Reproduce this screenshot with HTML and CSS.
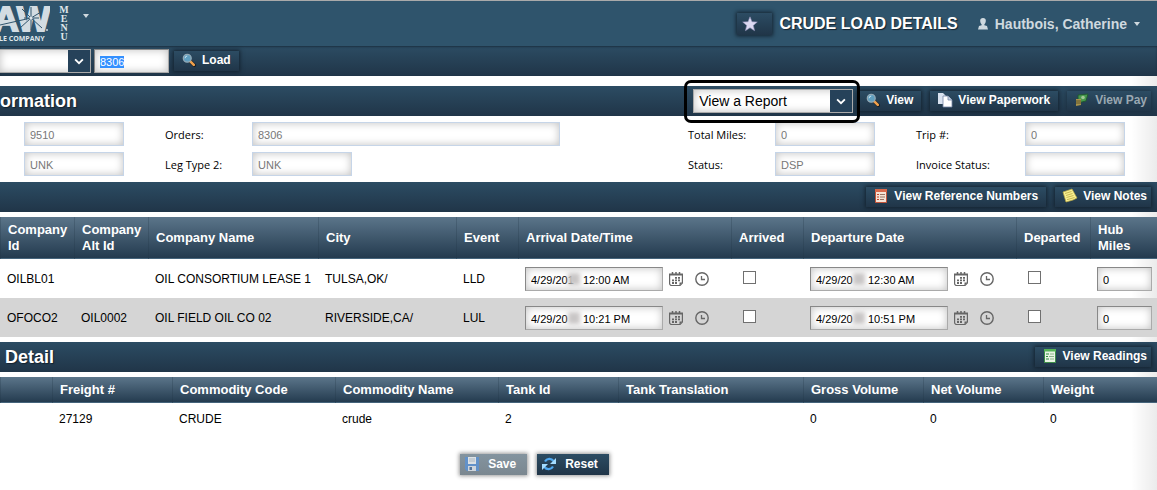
FILE: index.html
```html
<!DOCTYPE html>
<html lang="en">
<head>
<meta charset="UTF-8" />
<title>Crude Load Details</title>
<link rel="stylesheet" href="styles.css">
</head>
<body>

<!-- shared icons -->
<svg class="sprite" aria-hidden="true">
  <symbol id="i-search" viewBox="0 0 16 16">
    <path d="M9 9l5 5" stroke="#111b26" stroke-width="4" stroke-linecap="round"/>
    <path d="M9.500 9.500l4 4" stroke="#f0a04b" stroke-width="3" stroke-linecap="round"/>
    <circle cx="6" cy="6" r="4.500" fill="#5f9fc0" stroke="#93a9b5" stroke-width="1.500"/>
    <path d="M3.500 6a2.500 2.500 0 0 1 2.500-2.500" stroke="#d7eef8" fill="none"/>
  </symbol>
  <symbol id="i-cal" viewBox="0 0 14 14">
    <path d="M.6 2.500v9a2 2 0 0 0 2 2h8.400l2.400-2.400V2.500" fill="none" stroke="#666" stroke-width="1.200"/>
    <path d="M0 2.500h14" stroke="#666" stroke-width="2"/>
    <path d="M3.500 0v3M7 0v3M10.500 0v3" stroke="#666" stroke-width="1.500"/>
    <path d="M6 5.800h2M9 5.800h2M3 8.400h2M6 8.400h2M9 8.400h2M3 11h2M6 11h2" stroke="#666" stroke-width="1.800"/>
    <path d="M10.500 13.500v-3h3z" fill="#666"/>
  </symbol>
  <symbol id="i-clock" viewBox="0 0 14 14">
    <circle cx="7" cy="7" r="6.200" fill="none" stroke="#666" stroke-width="1.400"/>
    <path d="M6.500 4v3.500h3.500" fill="none" stroke="#666" stroke-width="1.300"/>
  </symbol>
  <symbol id="i-chev" viewBox="0 0 9 6">
    <path d="M1 1l3.500 3.500L8 1" fill="none" stroke="#fff" stroke-width="1.600"/>
  </symbol>
</svg>

<header class="topbar">
  <svg class="logo" width="50" height="37" viewBox="0 0 50 37" role="img" aria-label="Company logo">
    <text class="logo-big" x="50" y="26" text-anchor="end">AW</text>
    <g stroke="#2f546c" fill="none">
      <path d="M0 20L31 13l10-6M31 13l11 10M31 13V2M31 13L22 4M31 13L20 23M31 13v12" stroke-width="1"/>
      <path d="M24 13h15" stroke-width="1"/>
    </g>
    <circle cx="31" cy="13" r="1.500" fill="#dfe6ea"/>
    <circle cx="47" cy="25" r="1" fill="#c9d4db"/>
    <text class="logo-small" x="-1" y="36">LE COMPANY</text>
  </svg>
  <button class="menu" aria-label="Menu"><span>M</span><span>E</span><span>N</span><span>U</span></button>
  <span class="caret"></span>
  <div class="top-right">
    <button class="btn star" aria-label="Add to favorites">
      <svg width="16" height="16" viewBox="0 0 16 16"><path d="M8 .8l2 4.900 5.300.3-4 3.400 1.300 5.300L8 11.800l-4.600 2.900 1.300-5.300-4-3.400L6 5.700z" fill="#dcd9f2" stroke="#8f8fb5" stroke-width=".6"/></svg>
    </button>
    <h1>CRUDE LOAD DETAILS</h1>
    <button class="user">
      <svg width="10" height="12" viewBox="0 0 10 12"><path d="M5 0a2.800 2.800 0 0 1 2.800 3c0 1.600-.8 2.600-1.400 3.200v1l2.600.8 1 3.500H0L1 8l2.600-.8v-1C3 5.600 2.200 4.600 2.200 3A2.800 2.800 0 0 1 5 0z" fill="#cfd9df"/></svg>
      Hautbois, Catherine
      <span class="caret"></span>
    </button>
  </div>
</header>

<div class="bar toolbar">
  <div class="select-wrap lookup">
    <select aria-label="Search by"><option></option></select>
    <span class="chev"><svg width="10" height="7"><use href="#i-chev"/></svg></span>
  </div>
  <input class="field order-no" id="orderNo" type="text" value="8306" aria-label="Order number">
  <button class="btn"><svg width="16" height="14"><use href="#i-search"/></svg>Load</button>
</div>

<div class="bar info-bar">
  <h2>ormation</h2>
  <div class="actions">
    <div class="select-wrap report">
      <select aria-label="View a Report"><option>View a Report</option></select>
      <span class="chev"><svg width="10" height="7"><use href="#i-chev"/></svg></span>
    </div>
    <button class="btn"><svg width="16" height="14"><use href="#i-search"/></svg>View</button>
    <button class="btn">
      <svg width="16" height="16" viewBox="0 0 16 16"><path d="M1 1h5l3 3v8H1z" fill="#d9e2ef"/><path d="M6 4h5l4 4v7H6z" fill="#fff" stroke="#7387a5" stroke-width=".8"/><path d="M11 4v4h4" fill="#c3d0e2" stroke="#7387a5" stroke-width=".8"/></svg>View Paperwork
    </button>
    <button class="btn" disabled>
      <svg width="16" height="16" viewBox="0 0 16 16"><path d="M4 3l10-1-2 7-8 2z" fill="#4fae4a" stroke="#1f5d29"/><circle cx="9" cy="5.500" r="1.800" fill="#bfe8a5"/><path d="M2 7h5v6l-5 1z" fill="#c9a94c"/><path d="M2 9h5M2 11h5" stroke="#6c5a23"/></svg>View Pay
    </button>
  </div>
</div>

<form class="info">
  <input class="field" type="text" value="9510" aria-label="Leg number" disabled>
  <label for="orders">Orders:</label>
  <input class="field wide" id="orders" type="text" value="8306" disabled>
  <label for="miles">Total Miles:</label>
  <input class="field" id="miles" type="text" value="0" disabled>
  <label for="trip">Trip #:</label>
  <input class="field" id="trip" type="text" value="0" disabled>

  <input class="field" type="text" value="UNK" aria-label="Leg Type 1" disabled>
  <label for="leg2">Leg Type 2:</label>
  <input class="field" id="leg2" type="text" value="UNK" disabled>
  <label for="status">Status:</label>
  <input class="field" id="status" type="text" value="DSP" disabled>
  <label for="invoice">Invoice Status:</label>
  <input class="field" id="invoice" type="text" disabled>
</form>

<div class="bar">
  <div class="actions">
    <button class="btn">
      <svg width="16" height="16" viewBox="0 0 16 16"><path d="M2.500 1.500h11v13h-11z" fill="#f5e3d7" stroke="#c4553a"/><path d="M2 1h12v3H2z" fill="#d9694c"/><path d="M4 6.500h2M4 9h2M4 11.500h2" stroke="#c4452a" stroke-width="1.200"/><path d="M7 6.500h5M7 9h5M7 11.500h4" stroke="#9a7464"/></svg>View Reference Numbers
    </button>
    <button class="btn">
      <svg width="16" height="16" viewBox="0 0 16 16"><path d="M1 4l9-3 5 9-4 2-7 2z" fill="#f8ef90" stroke="#b9a843" stroke-width=".7"/><path d="M3 5.500l6.500-2M4 7.500l6.500-2M4.500 9.500l7-2M5 11.700l7.500-2.200" stroke="#b9a843" stroke-width=".8"/></svg>View Notes
    </button>
  </div>
</div>

<table class="grid stops">
  <colgroup><col class="c-id"><col class="c-id"><col class="c-name"><col class="c-city"><col class="c-event"><col class="c-date"><col class="c-check"><col class="c-date"><col class="c-id"><col></colgroup>
  <thead>
    <tr><th>Company Id</th><th>Company Alt Id</th><th>Company Name</th><th>City</th><th>Event</th><th>Arrival Date/Time</th><th>Arrived</th><th>Departure Date</th><th>Departed</th><th>Hub Miles</th></tr>
  </thead>
  <tbody>
    <tr>
      <td>OILBL01</td><td></td><td>OIL CONSORTIUM LEASE 1</td><td>TULSA,OK/</td><td>LLD</td>
      <td><div class="date"><input class="field" type="text" aria-label="Arrival" value="4/29/201&nbsp;&nbsp;&nbsp;12:00 AM"><i class="smudge"></i><svg width="14" height="14"><use href="#i-cal"/></svg><svg width="14" height="14"><use href="#i-clock"/></svg></div></td>
      <td><input type="checkbox" aria-label="Arrived"></td>
      <td><div class="date"><input class="field" type="text" aria-label="Departure" value="4/29/20&nbsp;&nbsp;&nbsp;&nbsp;&nbsp;12:30 AM"><i class="smudge"></i><svg width="14" height="14"><use href="#i-cal"/></svg><svg width="14" height="14"><use href="#i-clock"/></svg></div></td>
      <td><input type="checkbox" aria-label="Departed"></td>
      <td><input class="field hub" type="text" aria-label="Hub miles" value="0"></td>
    </tr>
    <tr>
      <td>OFOCO2</td><td>OIL0002</td><td>OIL FIELD OIL CO 02</td><td>RIVERSIDE,CA/</td><td>LUL</td>
      <td><div class="date"><input class="field" type="text" aria-label="Arrival" value="4/29/20&nbsp;&nbsp;&nbsp;&nbsp;&nbsp;10:21 PM"><i class="smudge"></i><svg width="14" height="14"><use href="#i-cal"/></svg><svg width="14" height="14"><use href="#i-clock"/></svg></div></td>
      <td><input type="checkbox" aria-label="Arrived"></td>
      <td><div class="date"><input class="field" type="text" aria-label="Departure" value="4/29/20&nbsp;&nbsp;&nbsp;&nbsp;&nbsp;10:51 PM"><i class="smudge"></i><svg width="14" height="14"><use href="#i-cal"/></svg><svg width="14" height="14"><use href="#i-clock"/></svg></div></td>
      <td><input type="checkbox" aria-label="Departed"></td>
      <td><input class="field hub" type="text" aria-label="Hub miles" value="0"></td>
    </tr>
  </tbody>
</table>

<div class="bar detail-bar">
  <h2>Detail</h2>
  <div class="actions">
    <button class="btn">
      <svg width="16" height="16" viewBox="0 0 16 16"><path d="M2.500 1.500h11v13h-11z" fill="#e9f5e4" stroke="#3d8f48"/><path d="M2 1h12v2.500H2z" fill="#55b356"/><path d="M4 6h3M4 8.500h2M4 11h3" stroke="#2f8a3c" stroke-width="1.200"/><path d="M8 6h4M7 8.500h5M8 11h4" stroke="#8bb389"/></svg>View Readings
    </button>
  </div>
</div>

<table class="grid freight">
  <colgroup><col class="f-first"><col class="f-small"><col class="f-wide"><col class="f-wide"><col class="f-small"><col class="f-trans"><col class="f-small"><col class="f-small"><col></colgroup>
  <thead>
    <tr><th></th><th>Freight #</th><th>Commodity Code</th><th>Commodity Name</th><th>Tank Id</th><th>Tank Translation</th><th>Gross Volume</th><th>Net Volume</th><th>Weight</th></tr>
  </thead>
  <tbody>
    <tr><td></td><td>27129</td><td>CRUDE</td><td>crude</td><td>2</td><td></td><td>0</td><td>0</td><td>0</td></tr>
  </tbody>
</table>

<div class="footer">
  <button class="btn save" disabled>
    <svg width="16" height="16" viewBox="0 0 16 16"><path d="M1 1h14v14H3l-2-2z" fill="#5b93d6"/><path d="M4 1h8v7H4z" fill="#f4f6f8"/><path d="M5 3h6M5 5h6" stroke="#b5c0ca"/><path d="M4 10h8v5H4z" fill="#e3e8ee"/><path d="M5.500 11h2.500v3H5.500z" fill="#4a6f9c"/></svg>Save
  </button>
  <button class="btn">
    <svg width="16" height="16" viewBox="0 0 16 16"><path d="M4 5.500a5 5 0 0 1 8.500-.5M12 10.500a5 5 0 0 1-8.500.5" fill="none" stroke="#4fa8f0" stroke-width="2.200"/><path d="M15 2v6H9zM1 14V8h6z" fill="#a4dcff"/></svg>Reset
  </button>
</div>

<script>
// order number is ready to be typed over
const orderNo = document.getElementById('orderNo');
orderNo.focus();
orderNo.select();
</script>

</body>
</html>
```
FILE: styles.css
```css
* {
  box-sizing: border-box;
}
body {
  margin: 0;
  min-height: 100vh;
  background: linear-gradient(to right, rgba(0, 0, 0, 0) calc(100% - 26px), rgba(0, 0, 0, 0.08)) #fff;
  color: #000;
  font-family: "Liberation Sans", Arial, sans-serif;
  font-size: 12px;
}
h1, h2 {
  margin: 0;
  color: #fff;
  text-shadow: 1px 1px 1px #14222e;
}
h1 {
  font-size: 16px;
}
h2 {
  font-size: 18px;
}
button {
  font-family: inherit;
  border: none;
  cursor: pointer;
}
.sprite {
  display: none;
}

/* top bar */
.topbar {
  display: flex;
  height: 46px;
  padding: 4px 17px 0 0;
  border-top: 1px solid #aaa;
  background: #2f546c;
}
.logo-big {
  font-size: 35px;
  font-weight: bold;
  fill: #d3dce2;
  stroke: #d3dce2;
  stroke-width: 2;
}
.logo-small {
  font-family: "Open Sans", sans-serif;
  font-size: 7px;
  font-weight: bold;
  fill: #dfe6ea;
}
.menu {
  display: flex;
  flex-direction: column;
  align-items: center;
  align-self: flex-start;
  width: 10px;
  margin: 0 14px 0 9px;
  padding: 0;
  background: none;
  color: #dfe6ea;
  font-family: "Liberation Serif", "Times New Roman", serif;
  font-size: 10px;
  font-weight: bold;
  line-height: 9px;
}
.caret {
  align-self: flex-start;
  margin-top: 9px;
  border: 3px solid transparent;
  border-top: 4px solid #cfd9df;
  border-bottom: none;
}
.top-right {
  display: flex;
  align-items: center;
  height: 38px;
  margin-left: auto;
}
.top-right h1 {
  margin: 0 20px 0 7px;
}
.user {
  display: flex;
  align-items: center;
  gap: 7px;
  padding: 0;
  background: none;
  color: #cfd9df;
  font-size: 14px;
  font-weight: bold;
}
.user .caret {
  align-self: center;
  margin-top: 0;
}

/* dark section bars */
.bar {
  display: flex;
  align-items: center;
  height: 30px;
  padding-right: 6px;
  background: linear-gradient(#2c4c63, #203548);
}
.toolbar {
  box-shadow: inset 0 1px 2px #1c3040;
}
.info-bar {
  margin-top: 10px;
}
.detail-bar {
  margin-top: 5px;
  padding-left: 5px;
}
.actions {
  display: flex;
  align-items: center;
  gap: 9px;
  margin-left: auto;
}
.actions .btn:last-child {
  padding-right: 4px;
}

.btn {
  display: flex;
  align-items: center;
  gap: 5px;
  height: 20px;
  padding: 0 8px 2px 7px;
  background: linear-gradient(#2c4c63, #203548);
  box-shadow: 0 0 4px 1px #13222f;
  color: #fff;
  font-size: 12px;
  font-weight: bold;
  white-space: nowrap;
}
.btn:disabled {
  box-shadow: 0 0 4px #1a2c3b;
  color: #9aa8b2;
}
.btn:disabled svg {
  opacity: 0.8;
}
.star {
  width: 35px;
  height: 22px;
  padding: 0 5px;
}

/* fields */
.field {
  width: 100%;
  height: 24px;
  padding: 2px 5px 0;
  border: 1px solid #aaa;
  border-top-color: #888;
  border-left-color: #888;
  background: #fff;
  box-shadow: inset 0 0 8px #c0c0c0;
  color: #000;
  font-family: inherit;
  font-size: 11px;
  outline: none;
}
.field:disabled {
  border-color: #c6d5e8;
  color: #777;
}
.field::selection {
  background: #3390ff;
  color: #fff;
}
.select-wrap {
  position: relative;
}
.select-wrap select {
  display: block;
  width: 100%;
  height: 24px;
  padding: 0 26px 0 5px;
  border: 1px solid #aaa;
  border-radius: 0;
  appearance: none;
  background: #fff;
  box-shadow: inset 0 0 8px #c0c0c0;
  color: #000;
  font-family: inherit;
  font-size: 14px;
  outline: none;
}
.chev {
  position: absolute;
  top: 1px;
  right: 1px;
  bottom: 1px;
  display: flex;
  align-items: center;
  justify-content: center;
  width: 22px;
  background: #26425a;
  pointer-events: none;
}
.lookup {
  width: 91px;
}
/* runs off the left side, so no border there */
.lookup select {
  border-left: none;
}
.order-no {
  width: 75px;
  margin: 0 5px 0 3px;
}
.report {
  width: 160px;
  margin-right: -4px;
}
/* highlight ring round the report list */
.report::after {
  content: '';
  position: absolute;
  inset: -9px -7px -10px -9px;
  border: 3px solid #000;
  border-radius: 7px;
  pointer-events: none;
}

.info {
  display: grid;
  grid-template-columns: 100px 128px 1fr 128px 100px 150px 100px;
  row-gap: 6px;
  align-items: center;
  padding: 6px 32px 6px 24px;
}
.info label {
  padding-left: 41px;
  font-family: "Open Sans", "Segoe UI", sans-serif;
  font-size: 11px;
  white-space: nowrap;
}
.info .field {
  width: 100px;
}
.info .wide {
  width: 100%;
  max-width: 308px;
}

/* data tables */
.grid {
  width: 100%;
  margin-top: 5px;
  border-spacing: 0;
  table-layout: fixed;
}
.grid thead tr {
  background: linear-gradient(#5b758a, #22394d);
}
.grid th {
  padding: 0 5px 0 7px;
  border-left: 1px solid rgba(30, 50, 68, 0.25);
  border-bottom: 1px solid #45647b;
  color: #fff;
  font-size: 13px;
  line-height: 16px;
  text-align: left;
}
.grid td {
  padding: 0 5px 0 7px;
  white-space: nowrap;
}
.stops thead tr {
  height: 42px;
}
.stops tbody tr {
  height: 39px;
}
.stops tbody tr:nth-child(even) {
  background: #d5d5d5;
}
.c-id {
  width: 74px;
}
.c-name {
  width: 170px;
}
.c-city {
  width: 138px;
}
.c-event {
  width: 62px;
}
.c-date {
  width: 213px;
}
.c-check {
  width: 72px;
}
.date {
  position: relative;
  display: flex;
  align-items: center;
  gap: 12px;
}
.date .field {
  width: 138px;
  margin-right: -6px;
}
/* masks the last digits of the year */
.smudge {
  position: absolute;
  top: 6px;
  left: 43px;
  width: 12px;
  height: 12px;
  background: #c9c6c6;
  filter: blur(2px);
}
.grid input[type="checkbox"] {
  display: block;
  width: 13px;
  height: 13px;
  margin: 0 0 2px 5px;
  border: 1px solid #707070;
  appearance: none;
  background: #fff;
}
.freight thead tr {
  height: 26px;
}
.freight tbody tr {
  height: 31px;
}
.f-first {
  width: 52px;
}
.f-small {
  width: 120px;
}
.f-wide {
  width: 163px;
}
.f-trans {
  width: 185px;
}

.footer {
  display: flex;
  justify-content: center;
  gap: 10px;
  padding: 20px 88px 15px 0;
}
.footer .btn {
  height: 21px;
  padding: 0 11px 1px 4px;
  gap: 8px;
  box-shadow: 0 0 4px 1px #999;
}
.footer .save {
  background: linear-gradient(#84949f, #7a8790);
  color: #fff;
}
```
